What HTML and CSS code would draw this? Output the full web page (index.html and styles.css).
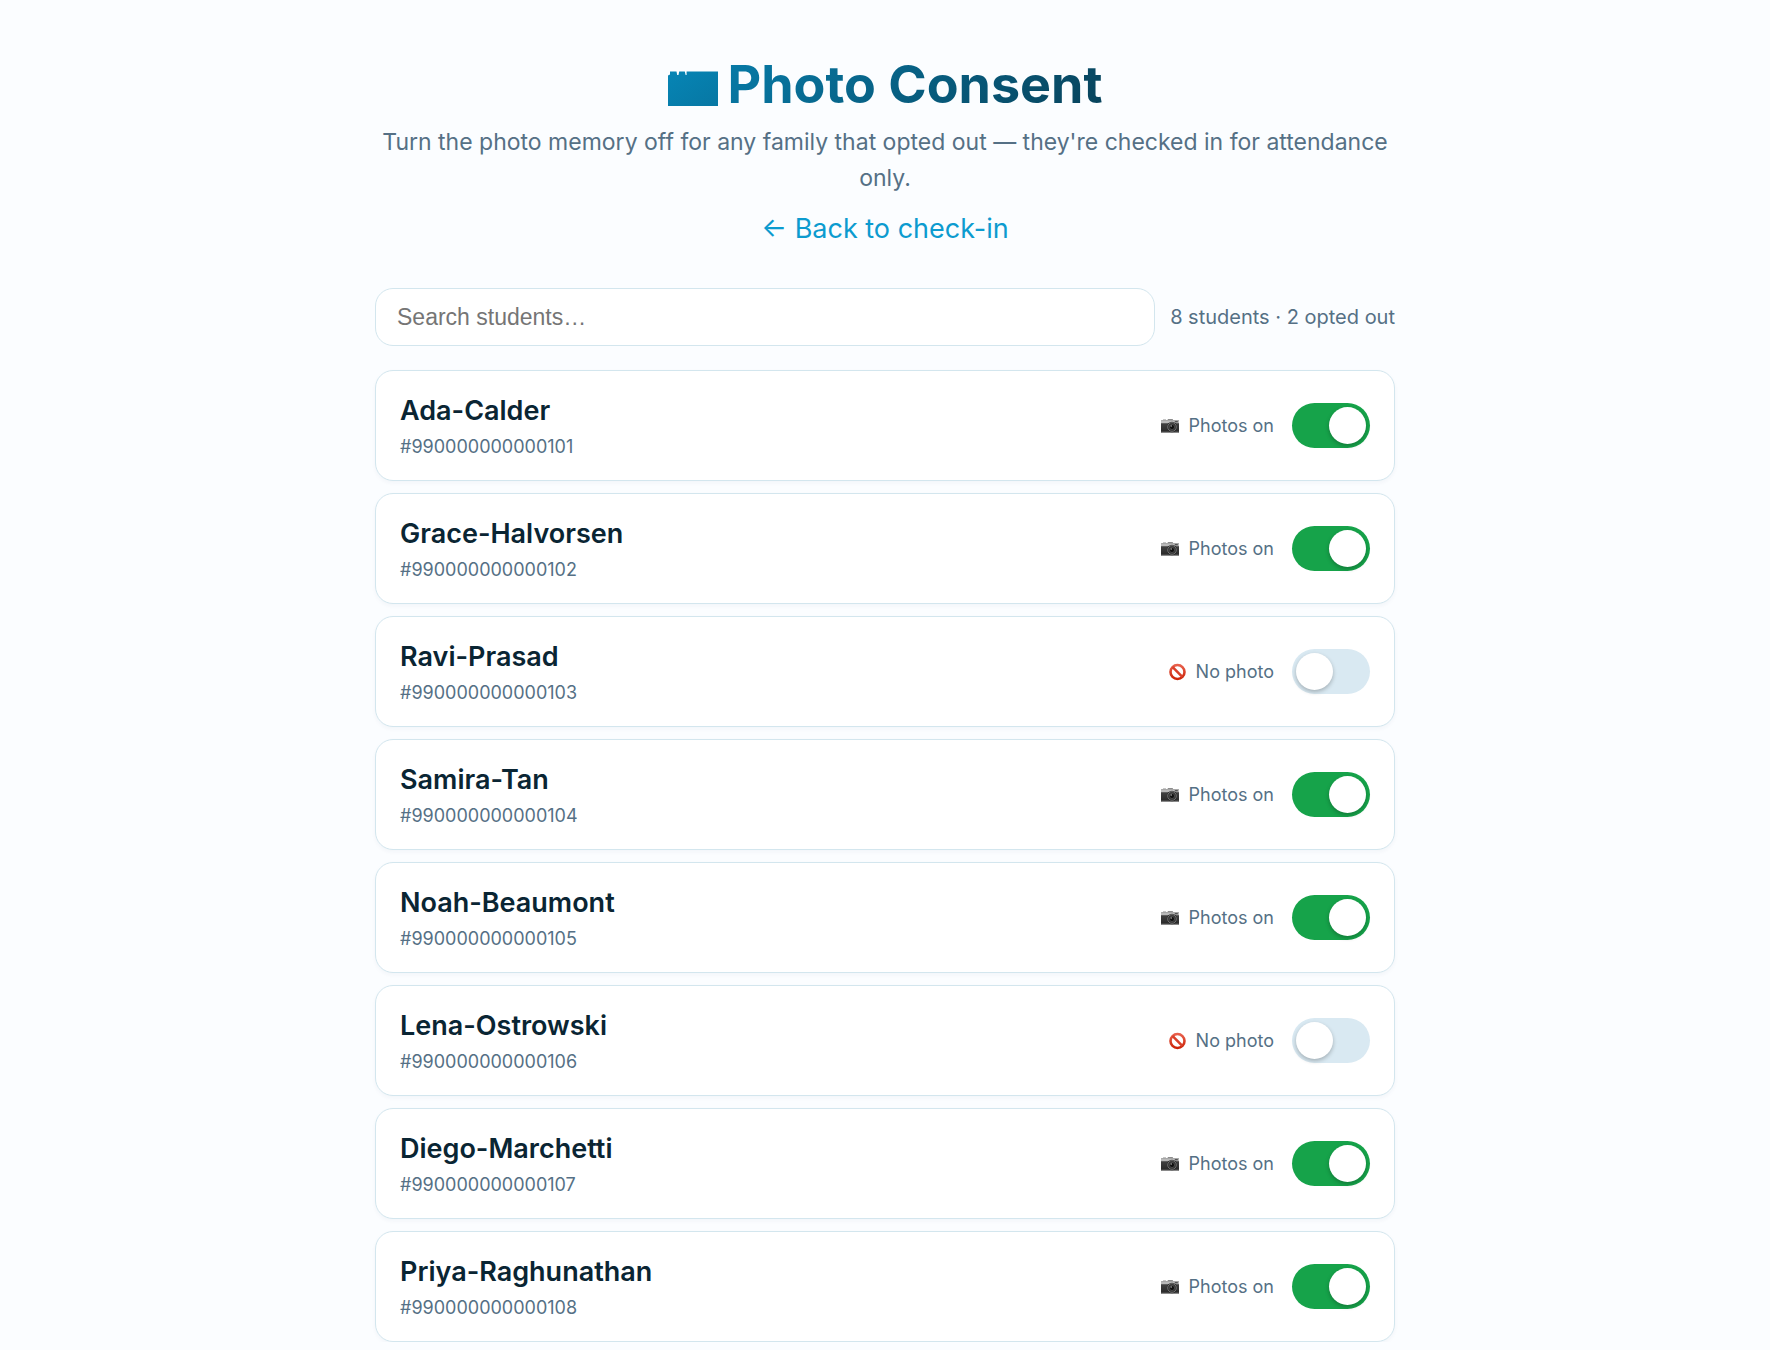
FILE: index.html
```html
<!DOCTYPE html>
<html lang="en">
	<head>
		<meta charset="utf-8">
		<meta name="viewport" content="width=device-width, initial-scale=1">
		<title>Photo Consent</title>
		<link rel="stylesheet" href="styles.css">
	</head>
	<body>
		<!-- shared icons -->
		<svg class="defs" width="0" height="0" aria-hidden="true">
			<defs>
				<linearGradient id="cam-body" x1="0" y1="0" x2="0" y2="1">
					<stop offset="0" stop-color="#4a4a4a"/>
					<stop offset="1" stop-color="#262626"/>
				</linearGradient>
				<linearGradient id="title-fill" x1="0" y1="0" x2="1" y2="1">
					<stop offset="0" stop-color="#0685b5"/>
					<stop offset="1" stop-color="#0777a3"/>
				</linearGradient>
				<linearGradient id="no-fill" x1="0" y1="0" x2="0" y2="1">
					<stop offset="0" stop-color="#e8604c"/>
					<stop offset="1" stop-color="#cc2408"/>
				</linearGradient>
			</defs>
			<symbol id="camera" viewBox="0 0 20 18">
				<path d="M3 2.6h3v1H3zM8 2h4.6l.8 1.6H7.2z" fill="#8d8d8d"/>
				<rect x="1" y="3.2" width="18" height="12.8" rx="1" fill="url(#cam-body)"/>
				<path d="M1 4.2a1 1 0 0 1 1-1h16a1 1 0 0 1 1 1v2H1z" fill="#b9b9b9"/>
				<path d="M1 14.8h18v.4a.8.8 0 0 1-.8.8H1.8a.8.8 0 0 1-.8-.8z" fill="#8a8a8a"/>
				<rect x="14.8" y="4" width="3" height="1.4" fill="#555"/>
				<circle cx="12" cy="10" r="5.2" fill="#2b2b2b"/>
				<circle cx="12" cy="10" r="4.3" fill="none" stroke="#858585" stroke-width=".8"/>
				<circle cx="12" cy="10" r="2.6" fill="#111" stroke="#666" stroke-width=".6"/>
				<circle cx="11.2" cy="9" r=".8" fill="#aaa"/>
			</symbol>
			<symbol id="no-photo" viewBox="0 0 20 18">
				<circle cx="10.500" cy="9" r="7" fill="none" stroke="url(#no-fill)" stroke-width="2.600"/>
				<path d="M5.700 4.2l9.6 9.6" stroke="#d9402a" stroke-width="2.600"/>
			</symbol>
		</svg>

		<main class="page">
			<header class="header">
				<h1 class="title">
					<svg class="title-icon" viewBox="0 0 50 42" aria-hidden="true">
						<path d="M0 11.500l2-1V7.500h6.500l.7 3.500h1.300l.7-3.500h5.600l.8 3.500h1V7.500H50V42H0z" fill="url(#title-fill)"/>
					</svg>
					<span class="title-text">Photo Consent</span>
				</h1>
				<p class="subtitle">Turn the photo memory off for any family that opted out — they're checked in for attendance only.</p>
				<a class="back" href="#">← Back to check-in</a>
			</header>

			<div class="toolbar">
				<input class="search" type="search" placeholder="Search students…" aria-label="Search students">
				<span class="count">8 students · 2 opted out</span>
			</div>

			<ul class="list">
				<li class="row">
					<div class="who"><span class="name" id="s101">Ada-Calder</span><span class="tag">#990000000000101</span></div>
					<label class="consent"><svg class="icon" aria-hidden="true"><use href="#camera"/></svg><span class="state">Photos on</span><input class="switch" type="checkbox" aria-describedby="s101" checked></label>
				</li>
				<li class="row">
					<div class="who"><span class="name" id="s102">Grace-Halvorsen</span><span class="tag">#990000000000102</span></div>
					<label class="consent"><svg class="icon" aria-hidden="true"><use href="#camera"/></svg><span class="state">Photos on</span><input class="switch" type="checkbox" aria-describedby="s102" checked></label>
				</li>
				<li class="row">
					<div class="who"><span class="name" id="s103">Ravi-Prasad</span><span class="tag">#990000000000103</span></div>
					<label class="consent"><svg class="icon" aria-hidden="true"><use href="#no-photo"/></svg><span class="state">No photo</span><input class="switch" type="checkbox" aria-describedby="s103"></label>
				</li>
				<li class="row">
					<div class="who"><span class="name" id="s104">Samira-Tan</span><span class="tag">#990000000000104</span></div>
					<label class="consent"><svg class="icon" aria-hidden="true"><use href="#camera"/></svg><span class="state">Photos on</span><input class="switch" type="checkbox" aria-describedby="s104" checked></label>
				</li>
				<li class="row">
					<div class="who"><span class="name" id="s105">Noah-Beaumont</span><span class="tag">#990000000000105</span></div>
					<label class="consent"><svg class="icon" aria-hidden="true"><use href="#camera"/></svg><span class="state">Photos on</span><input class="switch" type="checkbox" aria-describedby="s105" checked></label>
				</li>
				<li class="row">
					<div class="who"><span class="name" id="s106">Lena-Ostrowski</span><span class="tag">#990000000000106</span></div>
					<label class="consent"><svg class="icon" aria-hidden="true"><use href="#no-photo"/></svg><span class="state">No photo</span><input class="switch" type="checkbox" aria-describedby="s106"></label>
				</li>
				<li class="row">
					<div class="who"><span class="name" id="s107">Diego-Marchetti</span><span class="tag">#990000000000107</span></div>
					<label class="consent"><svg class="icon" aria-hidden="true"><use href="#camera"/></svg><span class="state">Photos on</span><input class="switch" type="checkbox" aria-describedby="s107" checked></label>
				</li>
				<li class="row">
					<div class="who"><span class="name" id="s108">Priya-Raghunathan</span><span class="tag">#990000000000108</span></div>
					<label class="consent"><svg class="icon" aria-hidden="true"><use href="#camera"/></svg><span class="state">Photos on</span><input class="switch" type="checkbox" aria-describedby="s108" checked></label>
				</li>
			</ul>
		</main>
	</body>
</html>
```
FILE: styles.css
```css
* {
  box-sizing: border-box;
  margin: 0;
  padding: 0;
}

body {
  background: #fbfdff;
  color: #0a2533;
  font-family: Inter, "Liberation Sans", sans-serif;
  font-size: 27px;
}

.defs {
  display: block;
}

.page {
  max-width: 1020px;
  margin: 0 auto;
  padding: 54px 0 0;
}

.header {
  text-align: center;
  margin-bottom: 34px;
}

.title {
  display: flex;
  justify-content: center;
  align-items: center;
  gap: 10px;
  font-size: 52px;
  line-height: 62px;
  font-weight: 700;
}

.title-icon {
  width: 50px;
  height: 42px;
}

.title-text {
  background: linear-gradient(135deg, #077ba8, #08425a);
  -webkit-background-clip: text;
  background-clip: text;
  color: transparent;
}

.subtitle {
  margin: 8px 0;
  color: #557085;
  font-size: 23px;
  line-height: 36px;
}

.back {
  display: inline-block;
  color: #0c9bcf;
  line-height: 50px;
  text-decoration: none;
}

.toolbar {
  display: flex;
  align-items: center;
  gap: 15px;
  margin-bottom: 24px;
}

.search {
  flex: 1;
  min-width: 0;
  height: 58px;
  padding: 0 21px;
  border: 1px solid #d3e6ee;
  border-radius: 18px;
  background: #fff;
  color: #0a2533;
  font-family: "Liberation Sans", Arial, sans-serif;
  font-size: 23px;
  appearance: none;
}

.search::placeholder {
  color: #757575;
}

.count {
  color: #557085;
  font-size: 20px;
  white-space: nowrap;
}

.list {
  display: grid;
  gap: 12px;
  list-style: none;
}

.row {
  display: flex;
  justify-content: space-between;
  align-items: center;
  padding: 19px 24px;
  border: 1px solid #d3e6ee;
  border-radius: 18px;
  background: #fff;
  box-shadow: 0 2px 4px rgba(10, 60, 90, 0.04);
}

.who {
  display: flex;
  flex-direction: column;
}

.name {
  font-weight: 600;
  line-height: 42px;
}

.tag {
  color: #557085;
  font-size: 18px;
  line-height: 29px;
}

.consent {
  display: flex;
  align-items: center;
  color: #557085;
  font-size: 18px;
  cursor: pointer;
}

.icon {
  width: 20px;
  height: 18px;
  margin-right: 9px;
}

.switch {
  appearance: none;
  width: 78px;
  height: 45px;
  margin-left: 18px;
  padding: 4px;
  border-radius: 24px;
  background: #d9e9f2;
  cursor: pointer;
}

.switch::before {
  content: "";
  display: block;
  width: 37px;
  height: 37px;
  border-radius: 50%;
  background: #fff;
  box-shadow: 0 2px 4px rgba(0, 0, 0, 0.25);
}

.switch:checked {
  background: #16a34a;
}

.switch:checked::before {
  margin-left: auto;
}
```
